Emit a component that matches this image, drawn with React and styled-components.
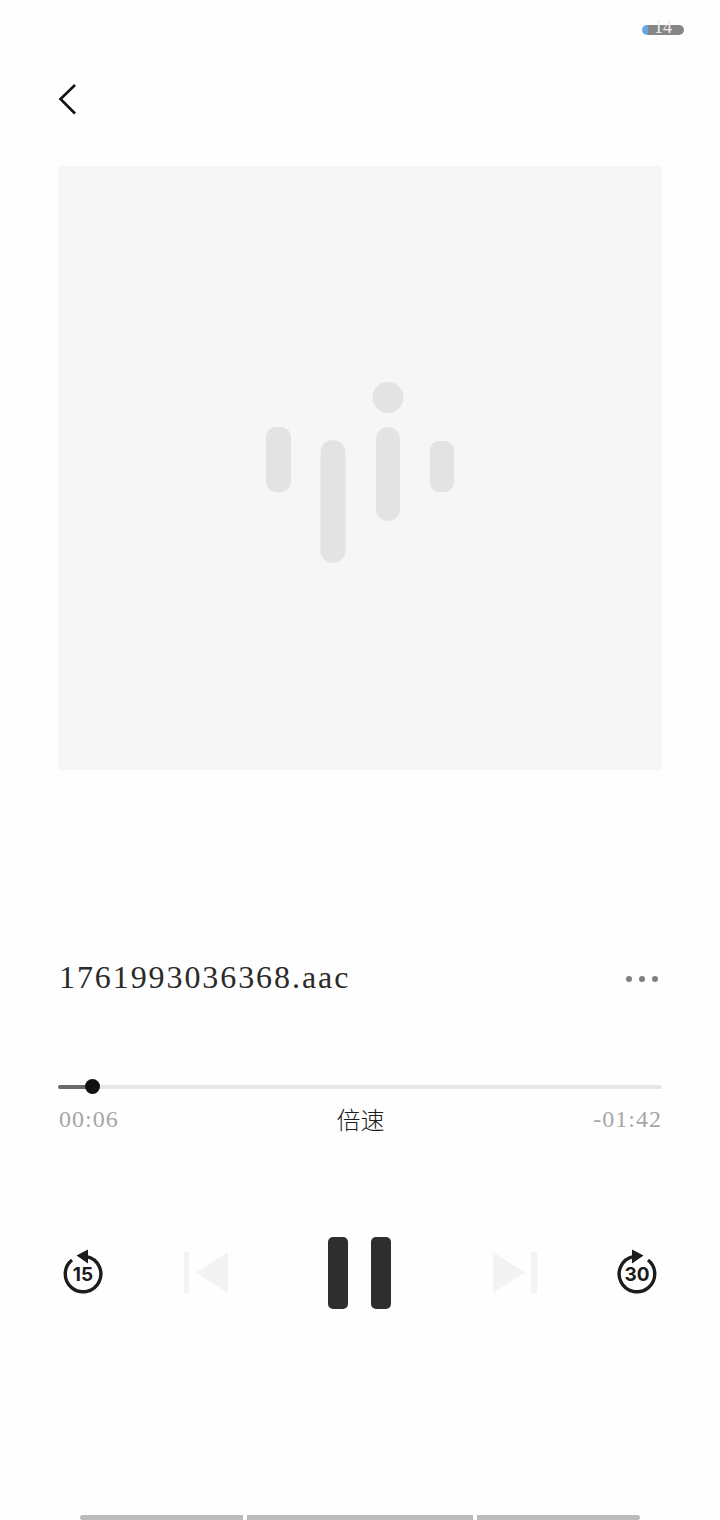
import React from 'react';
import styled, { createGlobalStyle } from 'styled-components';

const GlobalStyle = createGlobalStyle`
  html, body {
    margin: 0;
    padding: 0;
    background: #fefefe;
  }
`;

const Page = styled.div`
  width: 720px;
  height: 1520px;
  overflow: hidden;
  display: flex;
  flex-direction: column;
  background: #fefefe;
  font-family: "Liberation Serif", "Noto Sans CJK SC", serif;
`;

const StatusBar = styled.div`
  height: 60px;
  box-sizing: border-box;
  padding: 25px 36px 0 0;
  display: flex;
  justify-content: flex-end;
  align-items: flex-start;
`;

const Battery = styled.div`
  position: relative;
  width: 42px;
  height: 10px;
  border-radius: 5px;
  overflow: visible;
  background: linear-gradient(to right, #64a6e6 0, #64a6e6 6px, #868686 6px);
`;

const BatteryLevel = styled.span`
  position: absolute;
  left: 12px;
  top: -7px;
  font-size: 18px;
  line-height: 18px;
  color: #f0f0f0;
`;

const BackRow = styled.div`
  height: 106px;
  box-sizing: border-box;
  padding: 23px 0 0 58px;
`;

const Artwork = styled.div`
  height: 604px;
  box-sizing: border-box;
  padding-top: 10px;
  margin: 0 58px;
  background: #f6f6f6;
  display: flex;
  align-items: center;
  justify-content: center;
`;

const TitleRow = styled.div`
  height: 54px;
  margin-top: 180px;
  padding: 0 62px 0 59px;
  display: flex;
  align-items: center;
  justify-content: space-between;
`;

const FileName = styled.div`
  font-size: 32px;
  letter-spacing: 1.92px;
  color: #2a2a2a;
`;

const MoreDots = styled.div`
  display: flex;
  gap: 6.5px;
  margin-top: 4px;
`;

const Dot = styled.span`
  width: 6.5px;
  height: 6.5px;
  border-radius: 50%;
  background: #7f7f7f;
`;

const Track = styled.div`
  position: relative;
  height: 3.5px;
  margin: 81px 58px 0;
  border-radius: 2px;
  background: #e6e6e6;
`;

const TrackFill = styled.div`
  height: 100%;
  border-radius: 2px;
  background: #6a6a6a;
`;

const Knob = styled.div`
  position: absolute;
  top: -5.75px;
  width: 15px;
  height: 15px;
  margin-left: -7.5px;
  border-radius: 50%;
  background: #111;
`;

const TimeRow = styled.div`
  height: 34px;
  margin-top: 13.5px;
  padding: 0 58px 0 59px;
  display: grid;
  grid-template-columns: 1fr auto 1fr;
  align-items: center;
`;

const Time = styled.span`
  font-size: 24px;
  font-weight: 400;
  letter-spacing: 1px;
  color: #a6a6a6;
  text-align: ${p => (p.$end ? 'right' : 'left')};
`;

const Speed = styled.span`
  font-family: "Noto Sans CJK SC", sans-serif;
  font-size: 24px;
  font-weight: 300;
  line-height: 34px;
  color: #1c1c1c;
`;

const Transport = styled.div`
  margin-top: 101px;
  height: 72px;
  padding-left: 61px;
  display: grid;
  grid-template-columns: 123px 144px 165px 122px 44px;
  align-items: center;
`;

const Pause = styled.div`
  display: flex;
  gap: 23px;
`;

const PauseBar = styled.span`
  width: 20px;
  height: 72px;
  border-radius: 5px;
  background: #2e2e2e;
`;

const HomeBars = styled.div`
  margin-top: auto;
  padding: 0 80px;
  display: flex;
  gap: 4px;
`;

const HomeBar = styled.span`
  height: 5px;
  flex: ${p => p.$grow} 0 0;
  background: #bbbbbb;
  border-radius: ${p => p.$radius || '0'};
`;

const SkipLabel = styled.text`
  font-family: Inter, "Liberation Sans", sans-serif;
  font-size: 19px;
  font-weight: 700;
  fill: #1c1c1c;
  text-anchor: middle;
`;

const BackIcon = () => (
  <svg width="20" height="34" viewBox="0 0 20 34" fill="none">
    <path d="M17 2 L2.5 16 L17 30.5" stroke="#111" strokeWidth="2.6" />
  </svg>
);

const Logo = () => (
  <svg width="188" height="182" viewBox="0 0 188 182" fill="#e3e3e3">
    <rect x="0" y="45" width="25" height="65" rx="10" />
    <rect x="54.5" y="58" width="25" height="123" rx="12.5" />
    <rect x="110" y="45" width="24" height="94" rx="12" />
    <circle cx="122" cy="15.5" r="15.5" />
    <rect x="164" y="59" width="24" height="51" rx="9" />
  </svg>
);

const SkipBack = () => (
  <svg width="44" height="48" viewBox="0 0 44 48" fill="none">
    <path d="M26 7.6 A17.8 17.8 0 1 1 11 11" stroke="#1c1c1c" strokeWidth="3.4" />
    <path d="M15.5 6.5 L27 0.5 L27 14.5 Z" fill="#1c1c1c" />
    <SkipLabel x="22" y="31.5">15</SkipLabel>
  </svg>
);

const SkipForward = () => (
  <svg width="44" height="48" viewBox="0 0 44 48" fill="none">
    <path d="M18 7.6 A17.8 17.8 0 1 0 33 11" stroke="#1c1c1c" strokeWidth="3.4" />
    <path d="M28.5 6.5 L17 0.5 L17 14.5 Z" fill="#1c1c1c" />
    <SkipLabel x="22" y="31.5">30</SkipLabel>
  </svg>
);

const PrevIcon = () => (
  <svg width="44" height="42" viewBox="0 0 44 42" fill="#f3f3f3">
    <rect x="0" y="0" width="5" height="41" />
    <path d="M12 20.5 L44 0 L44 41 Z" />
  </svg>
);

const NextIcon = () => (
  <svg width="44" height="42" viewBox="0 0 44 42" fill="#f3f3f3">
    <path d="M0 0 L32 20.5 L0 41 Z" />
    <rect x="38" y="0" width="6" height="41" />
  </svg>
);

const App = () => {
  const progress = 34;

  return (
    <Page>
      <GlobalStyle />
      <StatusBar>
        <Battery>
          <BatteryLevel>14</BatteryLevel>
        </Battery>
      </StatusBar>
      <BackRow>
        <BackIcon />
      </BackRow>
      <Artwork>
        <Logo />
      </Artwork>
      <TitleRow>
        <FileName>1761993036368.aac</FileName>
        <MoreDots>
          <Dot />
          <Dot />
          <Dot />
        </MoreDots>
      </TitleRow>
      <Track>
        <TrackFill style={{ width: progress }} />
        <Knob style={{ left: progress }} />
      </Track>
      <TimeRow>
        <Time>00:06</Time>
        <Speed>倍速</Speed>
        <Time $end>-01:42</Time>
      </TimeRow>
      <Transport>
        <SkipBack />
        <PrevIcon />
        <Pause>
          <PauseBar />
          <PauseBar />
        </Pause>
        <NextIcon />
        <SkipForward />
      </Transport>
      <HomeBars>
        <HomeBar $grow={163} $radius="3px 0 0 3px" />
        <HomeBar $grow={226} />
        <HomeBar $grow={163} $radius="0 3px 3px 0" />
      </HomeBars>
    </Page>
  );
};

export default App;
